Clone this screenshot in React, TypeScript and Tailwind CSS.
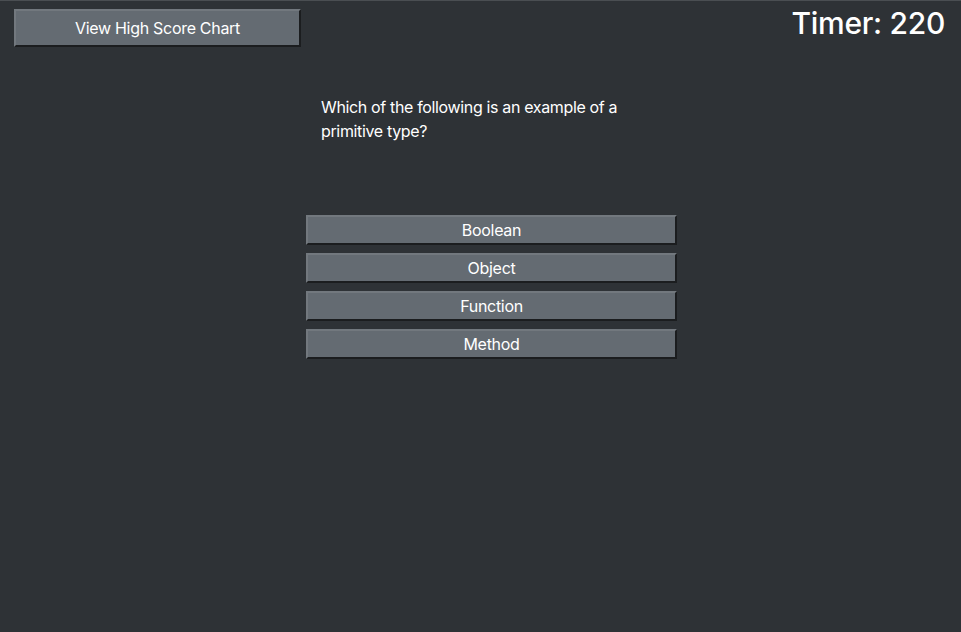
export default function App() {
  const answers = ["Boolean", "Object", "Function", "Method"];
  return (
    <div
      className="min-h-[632px] w-full bg-[#2e3236] border-t border-[#4a4e52] text-white"
      style={{ fontFamily: "Inter, 'Liberation Sans', sans-serif" }}
    >
      <div className="flex items-start justify-between pl-[14px] pr-[16px] pt-[8px]">
        <button className="w-[287px] h-[38px] bg-[#646b72] border-2 border-t-[#72787e] border-l-[#72787e] border-b-[#1b1d1f] border-r-[#1b1d1f] text-[16px] tracking-[-0.3px] text-white">
          View High Score Chart
        </button>
        <div className="text-[30px] font-medium leading-[40px] -mt-[6px] tracking-[-0.3px]">Timer: 220</div>
      </div>
      <div className="ml-[306px] w-[371px] mt-[48px]">
        <p className="pl-[15px] w-[330px] text-[16px] leading-[24px] tracking-[-0.35px]">
          Which of the following is an example of a primitive type?
        </p>
        <div className="mt-[72px] flex flex-col gap-[8px]">
          {answers.map((a) => (
            <button
              key={a}
              className="h-[30px] w-full bg-[#646b72] border-2 border-t-[#72787e] border-l-[#72787e] border-b-[#1b1d1f] border-r-[#1b1d1f] text-[16px] tracking-[-0.3px] text-white"
            >
              {a}
            </button>
          ))}
        </div>
      </div>
    </div>
  );
}
